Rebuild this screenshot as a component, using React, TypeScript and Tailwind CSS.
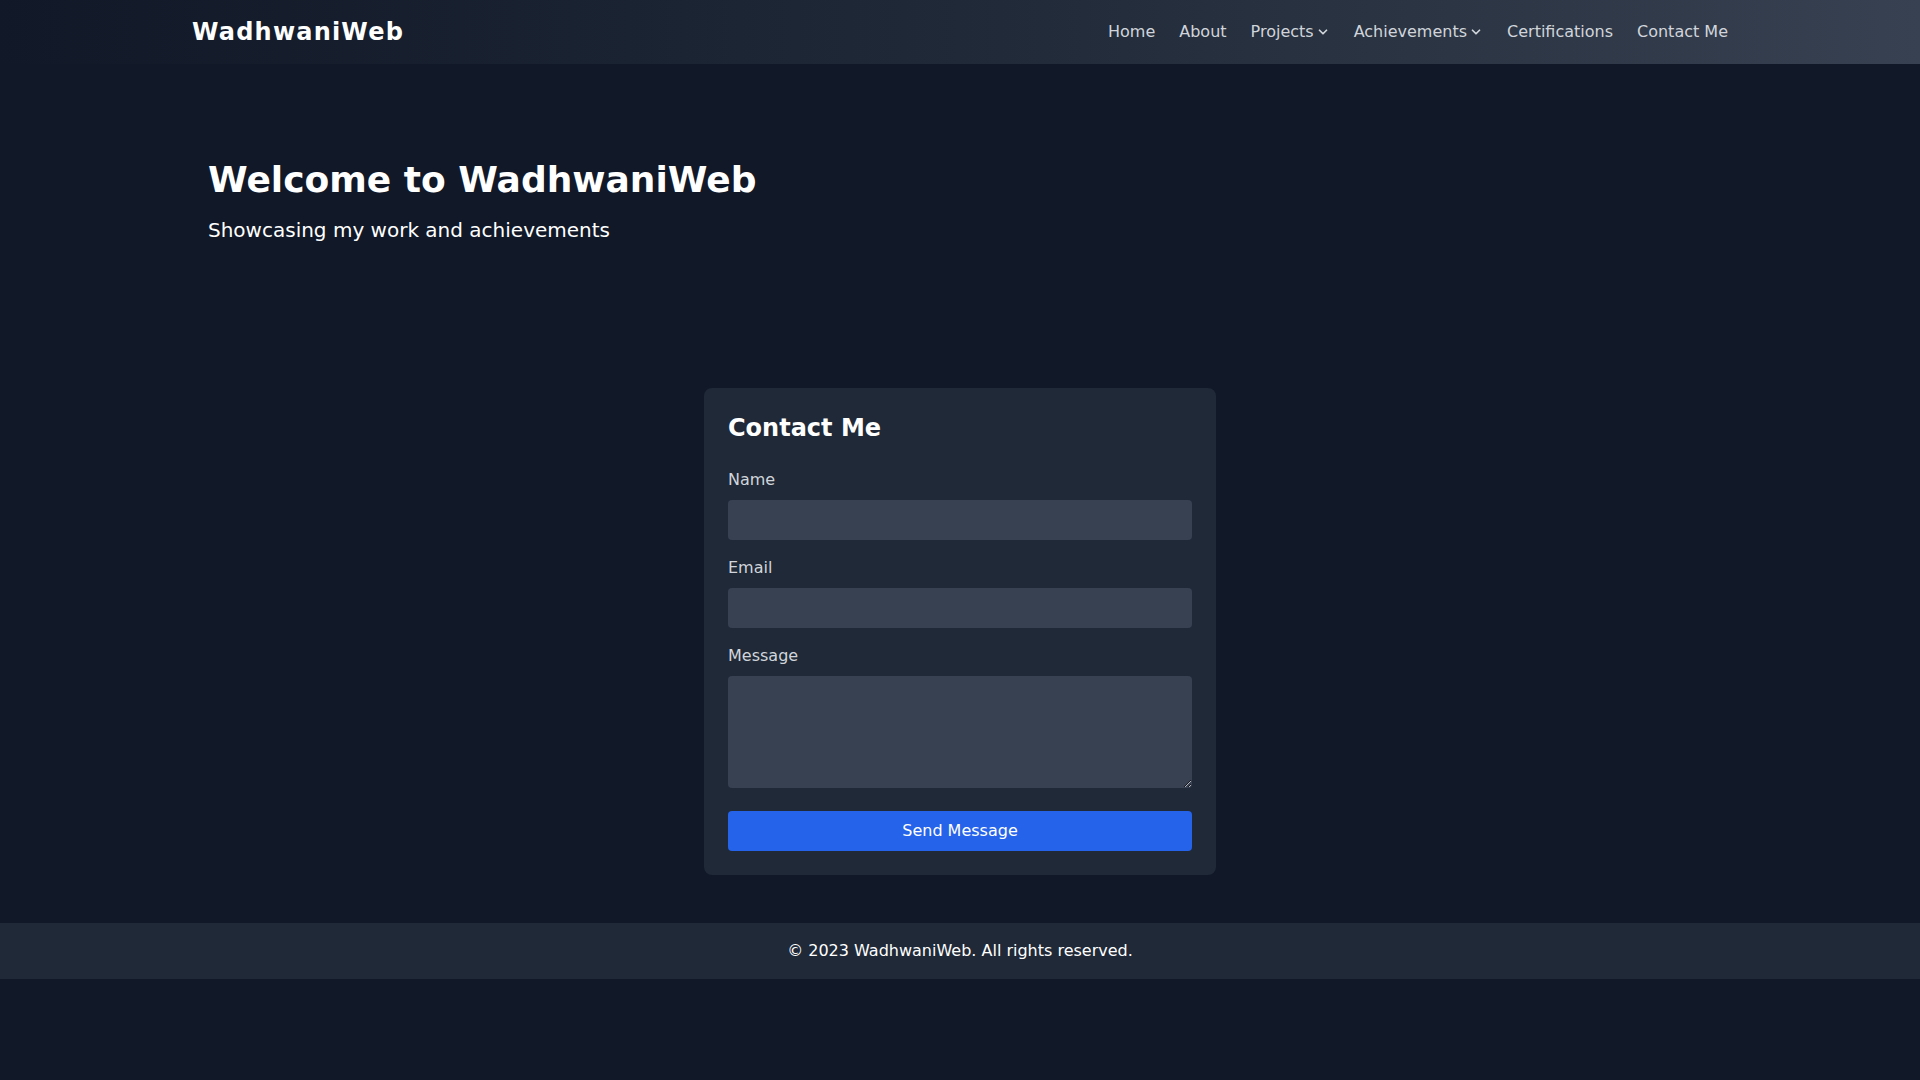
import React from 'react';
import { ChevronDown } from 'lucide-react';

const navLinks = [
  { label: 'Home' },
  { label: 'About' },
  { label: 'Projects', dropdown: true },
  { label: 'Achievements', dropdown: true },
  { label: 'Certifications' },
  { label: 'Contact Me' },
];

const App: React.FC = () => {
  return (
    <div className="min-h-screen bg-[#111827] text-white font-['DejaVu_Sans',sans-serif]">
      <nav className="bg-gradient-to-r from-[#111827] via-[#1f2937] to-[#374151]">
        <div className="container mx-auto flex items-center justify-between py-4">
          <span className="text-2xl font-bold tracking-wider">WadhwaniWeb</span>
          <ul className="flex items-center space-x-6">
            {navLinks.map((link) => (
              <li key={link.label} className="flex items-center text-[#d1d5db]">
                {link.label}
                {link.dropdown && <ChevronDown size={14} strokeWidth={3} className="ml-0.5" />}
              </li>
            ))}
          </ul>
        </div>
      </nav>

      <section className="container mx-auto px-4 py-24">
        <h1 className="text-4xl font-bold">Welcome to WadhwaniWeb</h1>
        <p className="mt-4 text-xl">Showcasing my work and achievements</p>
      </section>

      <section className="container mx-auto px-4 py-12">
        <div className="mx-auto max-w-lg rounded-lg bg-[#1f2937] p-6">
          <h2 className="mb-6 text-2xl font-bold">Contact Me</h2>
          <form>
            <div className="mb-4">
              <label className="mb-2 block text-[#d1d5db]">Name</label>
              <input type="text" className="w-full rounded bg-[#374151] px-3 py-2 text-white outline-none" />
            </div>
            <div className="mb-4">
              <label className="mb-2 block text-[#d1d5db]">Email</label>
              <input type="email" className="w-full rounded bg-[#374151] px-3 py-2 text-white outline-none" />
            </div>
            <div className="mb-4">
              <label className="mb-2 block text-[#d1d5db]">Message</label>
              <textarea rows={4} className="w-full rounded bg-[#374151] px-3 py-2 text-white outline-none" />
            </div>
            <button type="button" className="w-full rounded bg-[#2563eb] py-2 text-white">
              Send Message
            </button>
          </form>
        </div>
      </section>

      <footer className="bg-[#1f2937] py-4 text-center">
        <p>© 2023 WadhwaniWeb. All rights reserved.</p>
      </footer>
    </div>
  );
};

export default App;
